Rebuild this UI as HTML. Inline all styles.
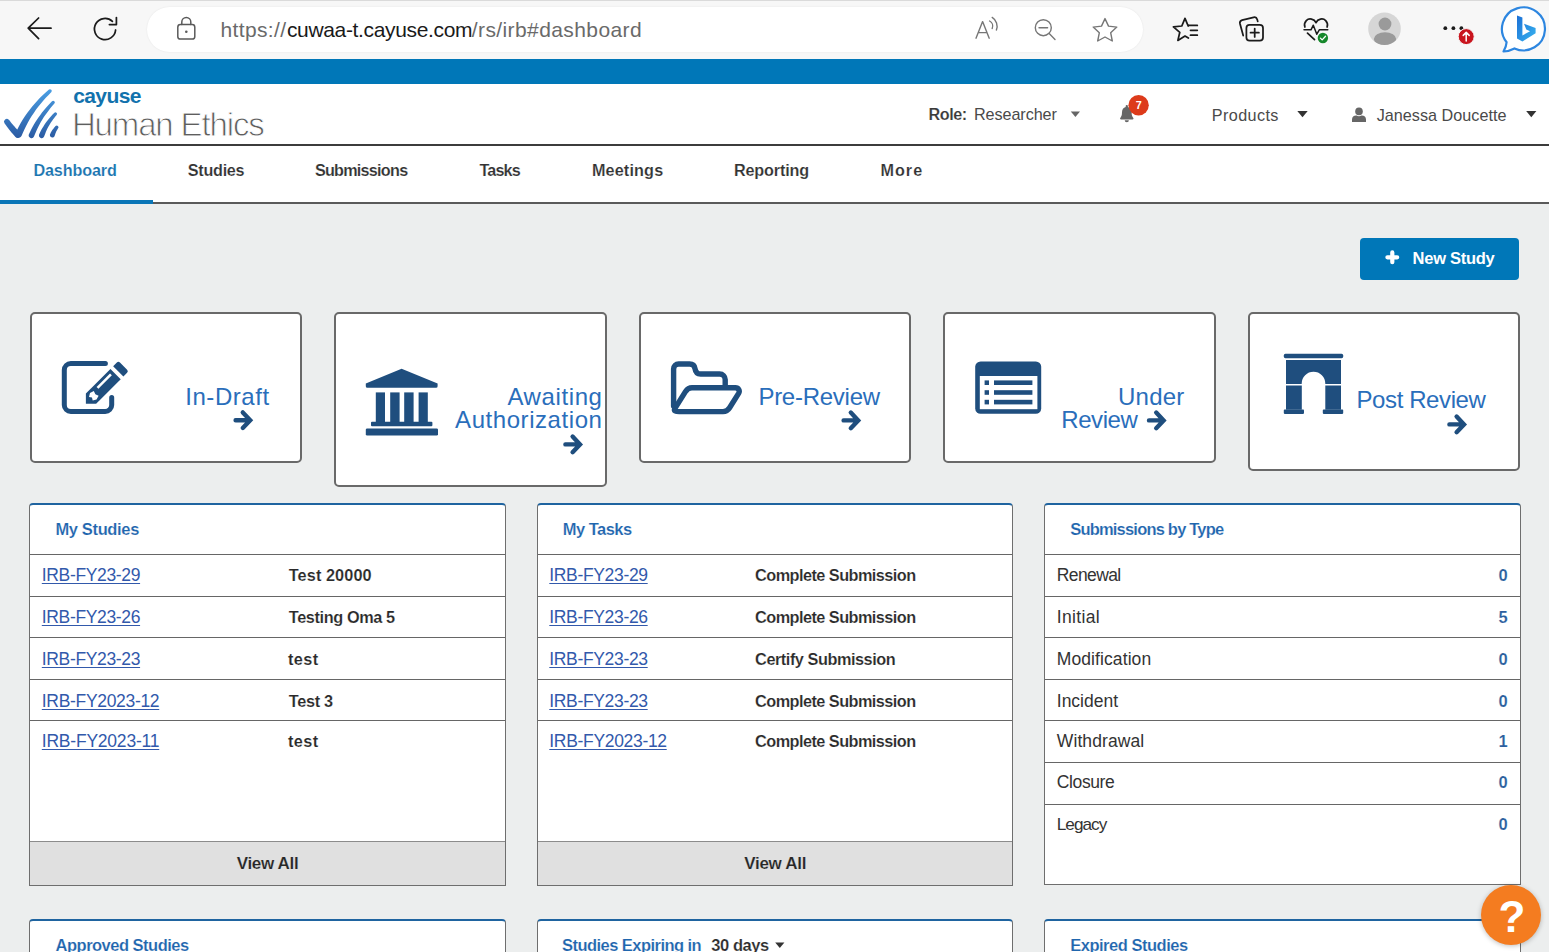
<!DOCTYPE html>
<html lang="en">
<head>
<meta charset="utf-8">
<title>Cayuse Human Ethics - Dashboard</title>
<style>
*{box-sizing:border-box;margin:0;padding:0}
html,body{width:1549px;height:952px;overflow:hidden;background:#eceeee;font-family:"Liberation Sans","DejaVu Sans",sans-serif;color:#333}
#root{position:relative;width:1549px;height:952px;overflow:hidden;background:#eceeee}
.b{position:absolute}
.t{position:absolute;white-space:nowrap;line-height:1}
.t.u{text-decoration:underline;text-decoration-thickness:1px;text-underline-offset:2px}
svg{position:absolute;left:0;top:0;overflow:visible}
/* browser chrome */
#chrome{left:0;top:0;width:1549px;height:59px;background:#f7f7f7;border-top:1px solid #dadada}
#pill{left:147px;top:7px;width:996px;height:45px;border-radius:23px;background:#fff;box-shadow:0 0 2px rgba(0,0,0,.08)}
/* app */
#bluebar{left:0;top:59px;width:1549px;height:25px;background:#0077b8}
#header{left:0;top:84px;width:1549px;height:62px;background:#fff;border-bottom:2px solid #3c3c3c}
#nav{left:0;top:146px;width:1549px;height:58px;background:#fff;border-bottom:2px solid #5a5a5a}
#navactive{left:0;top:200px;width:153px;height:4px;background:#0a76b7}
#newstudy{left:1360px;top:238px;width:159px;height:42px;border-radius:4px;background:#0077b8}
.card{position:absolute;background:#fff;border:2px solid #696969;border-radius:5px}
.panel{position:absolute;background:#fff;border:1px solid #6e6e6e;border-top:2px solid #1f64a0;border-radius:4px 4px 0 0}
.hr{position:absolute;height:1px;background:#666}
.viewall{position:absolute;background:#e0e0e0;border-top:1px solid #8c8c8c;height:44px}
#help{left:1481px;top:885px;width:60px;height:60px;border-radius:50%;background:#f47c20;box-shadow:0 1px 5px rgba(0,0,0,.25)}
</style>
</head>
<body>
<div id="root">

<!-- browser chrome -->
<div class="b" id="chrome"></div>
<div class="b" id="pill"></div>

<!-- app shell -->
<div class="b" id="bluebar"></div>
<div class="b" id="header"></div>
<div class="b" id="nav"></div>
<div class="b" id="navactive"></div>

<div class="b" id="newstudy"></div>

<!-- status cards -->
<div class="card" style="left:30px;top:312px;width:272px;height:151px"></div>
<div class="card" style="left:334px;top:312px;width:273px;height:175px"></div>
<div class="card" style="left:639px;top:312px;width:272px;height:151px"></div>
<div class="card" style="left:943px;top:312px;width:273px;height:151px"></div>
<div class="card" style="left:1248px;top:312px;width:272px;height:159px"></div>

<!-- panels row 1 -->
<div class="panel" style="left:29px;top:503px;width:477px;height:383px">
  <div class="hr" style="left:0;top:49px;width:475px"></div>
  <div class="hr" style="left:0;top:91px;width:475px"></div>
  <div class="hr" style="left:0;top:132px;width:475px"></div>
  <div class="hr" style="left:0;top:174px;width:475px"></div>
  <div class="hr" style="left:0;top:215px;width:475px"></div>
  <div class="viewall" style="left:0;top:336px;width:475px"></div>
</div>
<div class="panel" style="left:537px;top:503px;width:476px;height:383px">
  <div class="hr" style="left:0;top:49px;width:474px"></div>
  <div class="hr" style="left:0;top:91px;width:474px"></div>
  <div class="hr" style="left:0;top:132px;width:474px"></div>
  <div class="hr" style="left:0;top:174px;width:474px"></div>
  <div class="hr" style="left:0;top:215px;width:474px"></div>
  <div class="viewall" style="left:0;top:336px;width:474px"></div>
</div>
<div class="panel" style="left:1044px;top:503px;width:477px;height:382px">
  <div class="hr" style="left:0;top:49px;width:475px"></div>
  <div class="hr" style="left:0;top:91px;width:475px"></div>
  <div class="hr" style="left:0;top:132px;width:475px"></div>
  <div class="hr" style="left:0;top:174px;width:475px"></div>
  <div class="hr" style="left:0;top:215px;width:475px"></div>
  <div class="hr" style="left:0;top:257px;width:475px"></div>
  <div class="hr" style="left:0;top:299px;width:475px"></div>
</div>
<!-- panels row 2 -->
<div class="panel" style="left:29px;top:919px;width:477px;height:60px"></div>
<div class="panel" style="left:537px;top:919px;width:476px;height:60px"></div>
<div class="panel" style="left:1044px;top:919px;width:477px;height:60px"></div>

<div class="b" id="help"></div>

<svg width="1549" height="952" viewBox="0 0 1549 952">
<defs>
<linearGradient id="lg" gradientUnits="userSpaceOnUse" x1="0" y1="138" x2="0" y2="89"><stop offset="0" stop-color="#2b5ba3"/><stop offset="1" stop-color="#4a9fe4"/></linearGradient>
<linearGradient id="bg" x1="0" y1="0" x2="1" y2="1"><stop offset="0" stop-color="#1b6fd6"/><stop offset="1" stop-color="#39b5f0"/></linearGradient>
<clipPath id="av"><circle cx="1384.5" cy="28.8" r="16.3"/></clipPath>
</defs>
<!-- browser icons -->
<g fill="none" stroke="#1b1b1b" stroke-width="1.75" stroke-linecap="round" stroke-linejoin="round">
  <path d="M51 28.2H28.4M38.6 18 28.2 28.2 38.6 38.6"/>
  <path d="M115.6 30A10.6 10.6 0 1 1 112.4 21.4M116.4 17.6V24.6H109.4"/>
  <path d="M1188.2 26 1185 18.4 1181.8 26 1173.4 26.8 1179.8 32.3 1177.9 40.4 1185 36.1 1188.4 38.1M1188.5 25.4H1197.3M1190.5 30.3H1197.3M1190.5 35.2H1197.3"/>
  <rect x="1246.4" y="24.8" width="16.6" height="15.8" rx="3.2"/>
  <path d="M1254.7 28.6V36.9M1250.5 32.7H1258.9"/>
  <path d="M1243.2 35.6 1240 23.8A3 3 0 0 1 1242.1 20.2L1253.6 17.3A3 3 0 0 1 1257.2 19.4L1257.7 21.4"/>
  <path d="M1316 22.6C1314.2 18.8 1309 17.8 1306.3 20.6 1304.4 22.6 1304.2 25 1304.9 27M1316 22.6C1317.8 18.8 1323 17.8 1325.7 20.6 1327.6 22.6 1327.8 25 1327.1 27M1307.5 33.2 1314.5 39.6"/>
  <path d="M1304 29.8H1311L1313.3 25.2 1316.8 34.2 1319.3 29.8H1327.8" stroke-width="1.5"/>
</g>
<g fill="none" stroke="#5a5a5a" stroke-width="1.5" stroke-linecap="round" stroke-linejoin="round">
  <rect x="177.8" y="24.6" width="17" height="14.4" rx="2.6"/>
  <path d="M181.8 24.4V22A4.5 4.5 0 0 1 190.8 22V24.4"/>
</g>
<circle cx="186.3" cy="31.8" r="1.3" fill="#5a5a5a"/>
<g fill="none" stroke="#767676" stroke-width="1.4" stroke-linecap="round" stroke-linejoin="round">
  <path d="M976 38.2 982.6 21.6 989.2 38.2M978.4 32.6H986.8M989.6 21A6 6 0 0 1 992.2 28.6M992.2 17.4A10.5 10.5 0 0 1 996.4 30"/>
  <circle cx="1043.3" cy="27.7" r="8"/>
  <path d="M1049.2 33.6 1055 39.4M1039 27.7H1047.6"/>
  <path d="M1105 18.6 1108.5 26.1 1116.8 27.1 1110.7 32.8 1112.3 41 1105 37 1097.7 41 1099.3 32.8 1093.2 27.1 1101.5 26.1Z"/>
</g>
<circle cx="1322.9" cy="38" r="5.2" fill="#16882b"/>
<path d="M1320.4 38.1 1322.2 39.9 1325.5 36.3" fill="none" stroke="#fff" stroke-width="1.3" stroke-linecap="round" stroke-linejoin="round"/>
<circle cx="1384.5" cy="28.8" r="16.3" fill="#d6d6d6"/>
<g clip-path="url(#av)" fill="#9a9a9a"><circle cx="1385" cy="24" r="6.4"/><ellipse cx="1385" cy="39" rx="11.2" ry="6.8"/></g>
<g fill="#1b1b1b"><circle cx="1445.3" cy="28.2" r="1.9"/><circle cx="1453.4" cy="28.2" r="1.9"/><circle cx="1461.4" cy="28.2" r="1.9"/></g>
<circle cx="1466.2" cy="36.6" r="8" fill="#c9151e" stroke="#f7f7f7" stroke-width="1"/>
<path d="M1466.2 41V32.6M1463.2 35.4 1466.2 32.4 1469.2 35.4" fill="none" stroke="#fff" stroke-width="1.5" stroke-linecap="round" stroke-linejoin="round"/>
<!-- bing -->
<path d="M1503.5 51.5C1505.5 48 1506.4 45.5 1506.6 42.2A21.5 21.5 0 1 1 1514.5 48.4C1511 50.2 1507.5 51.2 1503.5 51.5Z" fill="#fff" stroke="#2d86e0" stroke-width="2.2" stroke-linejoin="round"/>
<path d="M1517 15.6 1522.4 17.5V35.5L1530 31.2 1526.3 29.5 1524 23.8 1535.6 27.9V33.2L1522.4 41.6 1517 38.4Z" fill="url(#bg)"/>

<!-- cayuse logo -->
<g fill="url(#lg)">
  <path d="M4.4 123.1 5.0 124.0 5.8 125.0 6.5 126.0 7.2 127.0 8.0 128.0 8.7 128.9 9.5 129.9 10.3 130.9 11.1 131.9 11.9 132.9 12.7 133.8 13.5 134.8 14.4 135.8 15.2 136.8 A3.2 3.2 0 0 0 20.0 132.4 L19.1 131.5 18.2 130.6 17.4 129.7 16.5 128.8 15.7 127.9 14.9 127.0 14.1 126.1 13.3 125.2 12.5 124.3 11.8 123.4 11.0 122.5 10.3 121.5 9.6 120.6 8.8 119.7 A2.8 2.8 0 0 0 4.4 123.1Z"/>
  <path d="M21.5 136.1 22.9 132.7 24.5 129.3 26.1 125.9 27.9 122.6 29.7 119.3 31.7 116.1 33.8 112.9 35.9 109.8 38.2 106.7 40.7 103.7 43.2 100.7 45.8 97.8 48.6 95.0 51.4 92.1 A1.8 1.8 0 0 0 49.0 89.5 L45.9 92.2 42.9 95.0 40.0 97.8 37.3 100.7 34.6 103.7 32.0 106.8 29.5 109.9 27.2 113.1 24.9 116.3 22.8 119.6 20.7 123.0 18.8 126.4 17.0 129.9 15.3 133.5 A3.4 3.4 0 0 0 21.5 136.1Z"/>
  <path d="M34.0 136.6 34.9 134.2 36.0 131.7 37.1 129.3 38.2 126.9 39.5 124.5 40.8 122.1 42.2 119.7 43.7 117.3 45.3 115.0 47.0 112.7 48.7 110.4 50.5 108.1 52.4 105.8 54.4 103.5 A1.6 1.6 0 0 0 52.0 101.3 L49.9 103.5 47.8 105.7 45.8 108.0 43.9 110.3 42.0 112.6 40.3 114.9 38.6 117.3 36.9 119.7 35.4 122.1 33.9 124.5 32.5 127.0 31.2 129.5 30.0 132.0 28.8 134.6 A2.8 2.8 0 0 0 34.0 136.6Z"/>
  <path d="M44.1 136.6 44.7 135.0 45.3 133.4 45.9 131.8 46.6 130.2 47.4 128.6 48.2 127.1 49.1 125.6 50.0 124.0 50.9 122.5 52.0 121.0 53.0 119.5 54.2 118.0 55.3 116.6 56.6 115.1 A1.6 1.6 0 0 0 54.2 112.9 L52.8 114.3 51.5 115.8 50.2 117.2 48.9 118.7 47.7 120.2 46.5 121.7 45.4 123.2 44.4 124.8 43.4 126.4 42.4 128.0 41.5 129.6 40.6 131.3 39.8 132.9 39.1 134.6 A2.7 2.7 0 0 0 44.1 136.6Z"/>
  <path d="M54.5 136.3 54.7 135.7 54.9 135.1 55.1 134.5 55.3 133.9 55.5 133.3 55.7 132.8 56.0 132.2 56.2 131.6 56.5 131.0 56.8 130.5 57.1 129.9 57.4 129.4 57.8 128.8 58.1 128.3 A1.7 1.7 0 0 0 55.5 126.1 L55.0 126.7 54.5 127.2 54.0 127.8 53.6 128.4 53.2 128.9 52.7 129.5 52.3 130.1 51.9 130.7 51.5 131.3 51.2 132.0 50.8 132.6 50.5 133.2 50.2 133.9 49.9 134.5 A2.5 2.5 0 0 0 54.5 136.3Z"/>
</g>



<!-- header icons -->
<path d="M1070.8 111.4H1080L1075.4 117Z" fill="#666"/>
<path d="M1297.3 111H1307.7L1302.5 117.3Z" fill="#333"/>
<path d="M1526.2 111H1536.4L1531.3 117.3Z" fill="#333"/>
<path d="M1125.7 106A1.1 1.1 0 0 1 1127.9 106V106.9C1130.3 107.5 1131.6 109.5 1131.6 112.2 1131.6 115.6 1132.5 116.9 1133.3 117.9 1133.8 118.5 1133.4 119.4 1132.6 119.4H1121C1120.2 119.4 1119.8 118.5 1120.3 117.9 1121.1 116.9 1122 115.6 1122 112.2 1122 109.5 1123.3 107.5 1125.7 106.9ZM1124.7 120.2H1128.9A2.1 2.1 0 0 1 1124.7 120.2Z" fill="#666"/>
<circle cx="1138.6" cy="105.2" r="10.2" fill="#dd3b1b"/>
<g fill="#666"><circle cx="1359" cy="111.4" r="3.8"/><path d="M1352 121.9V119.6C1352 117.2 1353.8 115.6 1356 115.6H1356.6C1358.2 116.4 1359.8 116.4 1361.4 115.6H1362C1364.2 115.6 1366 117.2 1366 119.6V121.9Z"/></g>
<!-- new study plus -->
<path d="M1392.3 252.4V262.2M1387.4 257.3H1397.2" stroke="#fff" stroke-width="4.2" stroke-linecap="round" fill="none"/>
<!-- dropdown caret in second row -->
<path d="M775.2 942.6H784.4L779.8 948Z" fill="#333"/>

<!-- card icons -->
<g id="arrow"><path d="M235.6 420.2H249.2M242.8 412.4 250.2 420.2 242.8 428" fill="none" stroke="#1f4e7e" stroke-width="4.4" stroke-linecap="round" stroke-linejoin="miter"/></g>
<path d="M565.4 444.4H579M572.6 436.6 580 444.4 572.6 452.2" fill="none" stroke="#1f4e7e" stroke-width="4.4" stroke-linecap="round"/>
<path d="M843.6 420.4H857.2M850.8 412.6 858.2 420.4 850.8 428.2" fill="none" stroke="#1f4e7e" stroke-width="4.4" stroke-linecap="round"/>
<path d="M1149 420.4H1162.6M1156.2 412.6 1163.6 420.4 1156.2 428.2" fill="none" stroke="#1f4e7e" stroke-width="4.4" stroke-linecap="round"/>
<path d="M1449.4 424.4H1463M1456.6 416.6 1464 424.4 1456.6 432.2" fill="none" stroke="#1f4e7e" stroke-width="4.4" stroke-linecap="round"/>

<!-- card1: edit -->
<g>
  <path d="M105.4 363.5H70.8A6.5 6.5 0 0 0 64.3 370V405A6.5 6.5 0 0 0 70.8 411.5H105.2A6.5 6.5 0 0 0 111.7 405V397.4" fill="none" stroke="#1f4e7e" stroke-width="5" stroke-linecap="round"/>
  <g transform="translate(85.9 403.7) rotate(-45)">
    <path d="M0 0 7.25 -7.25H42V7.25H7.25Z" fill="#1f4e7e"/>
    <path d="M45.8 -7.25H51A2.2 2.2 0 0 1 53.2 -5.05V5.05A2.2 2.2 0 0 1 51 7.25H45.8Z" fill="#1f4e7e"/>
    <path d="M19.4 -3H38.4" stroke="#fff" stroke-width="2.6" stroke-linecap="butt"/>
    <path d="M7 -2.6 10.4 -4.6 14.6 -3.4 13.4 0 14.6 3.4 10.4 4.6 7 2.6 8.6 0Z" fill="#fff"/>
  </g>
</g>
<!-- card2: bank -->
<g fill="#1f4e7e">
  <path d="M401.6 368.8 437.6 383.4V386.2A1.6 1.6 0 0 1 436 387.8H367.4A1.6 1.6 0 0 1 365.8 386.2V383.4Z"/>
  <rect x="375.8" y="392.4" width="9.2" height="29.6"/>
  <rect x="390.2" y="392.4" width="9.4" height="29.6"/>
  <rect x="404.2" y="392.4" width="9.4" height="29.6"/>
  <rect x="418.6" y="392.4" width="9.2" height="29.6"/>
  <rect x="371" y="421.8" width="61.4" height="4.4" rx="1"/>
  <rect x="365.8" y="428.4" width="72.2" height="7.2" rx="1.4"/>
</g>
<!-- card3: folder open -->
<g fill="none" stroke="#1f4e7e" stroke-width="5.4" stroke-linejoin="round" stroke-linecap="round">
  <path d="M673.6 406V369A5 5 0 0 1 678.6 364H689.6C692.5 364 694.6 365.8 695 368.6 695.5 372 697.6 374 700.6 374H719.6A5.6 5.6 0 0 1 725.2 379.6V386.6"/>
  <path d="M674.8 408.6 685.6 391.4C687.2 389 689 387.8 692 387.8H735.4C738.6 387.8 740.2 390.6 738.6 393.4L729.6 407.8C728 410.4 726 411.6 723 411.6H679.2C675.6 411.6 673.4 411 674.8 408.6Z"/>
</g>
<!-- card4: list -->
<g>
  <rect x="975.2" y="361.4" width="66" height="52.4" rx="5.4" fill="#1f4e7e"/>
  <rect x="979.8" y="376" width="57.6" height="33.2" fill="#fff"/>
  <g fill="#1f4e7e">
    <rect x="984.6" y="380.4" width="4.4" height="4.6"/><rect x="994" y="380.4" width="38.4" height="4.6"/>
    <rect x="984.6" y="390.2" width="4.4" height="4.6"/><rect x="994" y="390.2" width="38.4" height="4.6"/>
    <rect x="984.6" y="399.8" width="4.4" height="4.6"/><rect x="994" y="399.8" width="38.4" height="4.6"/>
  </g>
</g>
<!-- card5: arch -->
<g fill="#1f4e7e">
  <rect x="1283.8" y="353.8" width="59.4" height="4.4" rx="1.6"/>
  <path d="M1286 359.9H1341V384H1325.3V383.6A11.8 11.8 0 0 0 1301.7 383.6V384H1286Z"/>
  <rect x="1286" y="385.5" width="15.8" height="24.2"/>
  <rect x="1325.3" y="385.5" width="15.7" height="24.2"/>
  <rect x="1283.8" y="409.6" width="20.2" height="4.3" rx=".8"/>
  <rect x="1322.8" y="409.6" width="20.4" height="4.3" rx=".8"/>
</g>
</svg>


<div class="t" style="left:220.4px;top:19px;font-size:21px;color:#6a6a6a;letter-spacing:0.38px;">https://</div>
<div class="t" style="left:286.9px;top:19px;font-size:21px;color:#1a1a1a;letter-spacing:-0.34px;">cuwaa-t.cayuse.com</div>
<div class="t" style="left:471.8px;top:19px;font-size:21px;color:#6a6a6a;letter-spacing:0.40px;">/rs/irb#dashboard</div>
<div class="t" style="left:73.2px;top:85px;font-size:21px;font-weight:bold;color:#1272ad;letter-spacing:-0.59px;">cayuse</div>
<div class="t" style="left:71.9px;top:108px;font-size:33px;color:#5e5e5e;letter-spacing:-1.14px;-webkit-text-stroke:0.9px #fff;">Human Ethics</div>
<div class="t" style="left:928.4px;top:106px;font-size:16.2px;font-weight:bold;color:#3a3a3a;letter-spacing:-0.42px;-webkit-text-stroke:0.15px #fff;">Role:</div>
<div class="t" style="left:973.9px;top:106px;font-size:16.2px;color:#4a4a4a;letter-spacing:-0.07px;">Researcher</div>
<div class="t" style="left:1211.8px;top:107px;font-size:16.2px;color:#4a4a4a;letter-spacing:0.39px;">Products</div>
<div class="t" style="left:1376.7px;top:107px;font-size:16.2px;color:#4a4a4a;letter-spacing:0.01px;">Janessa Doucette</div>
<div class="t" style="left:1135.7px;top:100px;font-size:10.8px;font-weight:bold;color:#fff;">7</div>
<div class="t" style="left:33.4px;top:162px;font-size:16.2px;font-weight:bold;color:#1a75b0;letter-spacing:-0.13px;-webkit-text-stroke:0.15px #fff;">Dashboard</div>
<div class="t" style="left:187.8px;top:162px;font-size:16.2px;font-weight:bold;color:#333;letter-spacing:-0.28px;-webkit-text-stroke:0.15px #fff;">Studies</div>
<div class="t" style="left:314.9px;top:162px;font-size:16.2px;font-weight:bold;color:#333;letter-spacing:-0.75px;-webkit-text-stroke:0.15px #fff;">Submissions</div>
<div class="t" style="left:479.4px;top:162px;font-size:16.2px;font-weight:bold;color:#333;letter-spacing:-0.85px;-webkit-text-stroke:0.15px #fff;">Tasks</div>
<div class="t" style="left:591.9px;top:162px;font-size:16.2px;font-weight:bold;color:#333;letter-spacing:0.16px;-webkit-text-stroke:0.15px #fff;">Meetings</div>
<div class="t" style="left:733.9px;top:162px;font-size:16.2px;font-weight:bold;color:#333;letter-spacing:-0.14px;-webkit-text-stroke:0.15px #fff;">Reporting</div>
<div class="t" style="left:880.4px;top:162px;font-size:16.2px;font-weight:bold;color:#333;letter-spacing:1.04px;-webkit-text-stroke:0.15px #fff;">More</div>
<div class="t" style="left:1412.6px;top:250px;font-size:16.5px;font-weight:bold;color:#fff;letter-spacing:-0.27px;">New Study</div>
<div class="t" style="left:185.2px;top:385px;font-size:24px;color:#2a6ebb;letter-spacing:0.56px;">In-Draft</div>
<div class="t" style="left:507.4px;top:385px;font-size:24px;color:#2a6ebb;letter-spacing:0.61px;">Awaiting</div>
<div class="t" style="left:455.1px;top:408px;font-size:24px;color:#2a6ebb;letter-spacing:0.56px;">Authorization</div>
<div class="t" style="left:758.4px;top:385px;font-size:24px;color:#2a6ebb;letter-spacing:-0.26px;">Pre-Review</div>
<div class="t" style="left:1118.0px;top:385px;font-size:24px;color:#2a6ebb;letter-spacing:0.24px;">Under</div>
<div class="t" style="left:1061.3px;top:408px;font-size:24px;color:#2a6ebb;letter-spacing:-0.44px;">Review</div>
<div class="t" style="left:1356.5px;top:388px;font-size:24px;color:#2a6ebb;letter-spacing:-0.40px;">Post Review</div>
<div class="t" style="left:55.4px;top:521px;font-size:16.5px;font-weight:bold;color:#1f66ae;letter-spacing:-0.35px;-webkit-text-stroke:0.15px #fff;">My Studies</div>
<div class="t" style="left:562.8px;top:521px;font-size:16.5px;font-weight:bold;color:#1f66ae;letter-spacing:-0.54px;-webkit-text-stroke:0.15px #fff;">My Tasks</div>
<div class="t" style="left:1070.2px;top:521px;font-size:16.5px;font-weight:bold;color:#1f66ae;letter-spacing:-0.80px;-webkit-text-stroke:0.15px #fff;">Submissions by Type</div>
<a href="#" class="t u" style="left:41.8px;top:567px;font-size:17.5px;color:#3259ab;letter-spacing:-0.35px;">IRB-FY23-29</a>
<div class="t" style="left:288.8px;top:567px;font-size:16.3px;font-weight:bold;color:#2a2a2a;letter-spacing:0.08px;-webkit-text-stroke:0.15px #fff;">Test 20000</div>
<a href="#" class="t u" style="left:41.8px;top:609px;font-size:17.5px;color:#3259ab;letter-spacing:-0.35px;">IRB-FY23-26</a>
<div class="t" style="left:288.8px;top:609px;font-size:16.3px;font-weight:bold;color:#2a2a2a;letter-spacing:-0.39px;-webkit-text-stroke:0.15px #fff;">Testing Oma 5</div>
<a href="#" class="t u" style="left:41.8px;top:651px;font-size:17.5px;color:#3259ab;letter-spacing:-0.35px;">IRB-FY23-23</a>
<div class="t" style="left:288.1px;top:651px;font-size:16.3px;font-weight:bold;color:#2a2a2a;letter-spacing:0.35px;-webkit-text-stroke:0.15px #fff;">test</div>
<a href="#" class="t u" style="left:41.8px;top:693px;font-size:17.5px;color:#3259ab;letter-spacing:-0.32px;">IRB-FY2023-12</a>
<div class="t" style="left:288.8px;top:693px;font-size:16.3px;font-weight:bold;color:#2a2a2a;letter-spacing:-0.31px;-webkit-text-stroke:0.15px #fff;">Test 3</div>
<a href="#" class="t u" style="left:41.8px;top:733px;font-size:17.5px;color:#3259ab;letter-spacing:-0.22px;">IRB-FY2023-11</a>
<div class="t" style="left:288.1px;top:733px;font-size:16.3px;font-weight:bold;color:#2a2a2a;letter-spacing:0.35px;-webkit-text-stroke:0.15px #fff;">test</div>
<a href="#" class="t u" style="left:549.3px;top:567px;font-size:17.5px;color:#3259ab;letter-spacing:-0.34px;">IRB-FY23-29</a>
<div class="t" style="left:755.1px;top:567px;font-size:16.3px;font-weight:bold;color:#2a2a2a;letter-spacing:-0.55px;-webkit-text-stroke:0.15px #fff;">Complete Submission</div>
<a href="#" class="t u" style="left:549.3px;top:609px;font-size:17.5px;color:#3259ab;letter-spacing:-0.34px;">IRB-FY23-26</a>
<div class="t" style="left:755.1px;top:609px;font-size:16.3px;font-weight:bold;color:#2a2a2a;letter-spacing:-0.55px;-webkit-text-stroke:0.15px #fff;">Complete Submission</div>
<a href="#" class="t u" style="left:549.3px;top:651px;font-size:17.5px;color:#3259ab;letter-spacing:-0.34px;">IRB-FY23-23</a>
<div class="t" style="left:755.1px;top:651px;font-size:16.3px;font-weight:bold;color:#2a2a2a;letter-spacing:-0.46px;-webkit-text-stroke:0.15px #fff;">Certify Submission</div>
<a href="#" class="t u" style="left:549.3px;top:693px;font-size:17.5px;color:#3259ab;letter-spacing:-0.34px;">IRB-FY23-23</a>
<div class="t" style="left:755.1px;top:693px;font-size:16.3px;font-weight:bold;color:#2a2a2a;letter-spacing:-0.55px;-webkit-text-stroke:0.15px #fff;">Complete Submission</div>
<a href="#" class="t u" style="left:549.3px;top:733px;font-size:17.5px;color:#3259ab;letter-spacing:-0.32px;">IRB-FY2023-12</a>
<div class="t" style="left:755.1px;top:733px;font-size:16.3px;font-weight:bold;color:#2a2a2a;letter-spacing:-0.55px;-webkit-text-stroke:0.15px #fff;">Complete Submission</div>
<div class="t" style="left:1056.8px;top:567px;font-size:17.5px;color:#333;letter-spacing:-0.62px;">Renewal</div>
<div class="t" style="left:1498.6px;top:567px;font-size:16.5px;font-weight:bold;color:#2c5f9e;-webkit-text-stroke:0.15px #fff;">0</div>
<div class="t" style="left:1056.8px;top:609px;font-size:17.5px;color:#333;letter-spacing:0.34px;">Initial</div>
<div class="t" style="left:1498.6px;top:609px;font-size:16.5px;font-weight:bold;color:#2c5f9e;-webkit-text-stroke:0.15px #fff;">5</div>
<div class="t" style="left:1056.8px;top:651px;font-size:17.5px;color:#333;letter-spacing:0.09px;">Modification</div>
<div class="t" style="left:1498.6px;top:651px;font-size:16.5px;font-weight:bold;color:#2c5f9e;-webkit-text-stroke:0.15px #fff;">0</div>
<div class="t" style="left:1056.8px;top:693px;font-size:17.5px;color:#333;letter-spacing:-0.01px;">Incident</div>
<div class="t" style="left:1498.6px;top:693px;font-size:16.5px;font-weight:bold;color:#2c5f9e;-webkit-text-stroke:0.15px #fff;">0</div>
<div class="t" style="left:1056.8px;top:733px;font-size:17.5px;color:#333;letter-spacing:0.09px;">Withdrawal</div>
<div class="t" style="left:1498.6px;top:733px;font-size:16.5px;font-weight:bold;color:#2c5f9e;-webkit-text-stroke:0.15px #fff;">1</div>
<div class="t" style="left:1056.8px;top:774px;font-size:17.5px;color:#333;letter-spacing:-0.39px;">Closure</div>
<div class="t" style="left:1498.6px;top:774px;font-size:16.5px;font-weight:bold;color:#2c5f9e;-webkit-text-stroke:0.15px #fff;">0</div>
<div class="t" style="left:1056.8px;top:816px;font-size:17.18px;color:#333;letter-spacing:-0.98px;">Legacy</div>
<div class="t" style="left:1498.6px;top:816px;font-size:16.5px;font-weight:bold;color:#2c5f9e;-webkit-text-stroke:0.15px #fff;">0</div>
<div class="t" style="left:236.8px;top:855px;font-size:17px;font-weight:bold;color:#262626;letter-spacing:-0.34px;-webkit-text-stroke:0.15px #e0e0e0;">View All</div>
<div class="t" style="left:744.2px;top:855px;font-size:17px;font-weight:bold;color:#262626;letter-spacing:-0.28px;-webkit-text-stroke:0.15px #e0e0e0;">View All</div>
<div class="t" style="left:55.6px;top:937px;font-size:16.5px;font-weight:bold;color:#1f66ae;letter-spacing:-0.51px;-webkit-text-stroke:0.15px #fff;">Approved Studies</div>
<div class="t" style="left:562.1px;top:937px;font-size:16.5px;font-weight:bold;color:#1f66ae;letter-spacing:-0.55px;-webkit-text-stroke:0.15px #fff;">Studies Expiring in</div>
<div class="t" style="left:711.3px;top:937px;font-size:16.5px;font-weight:bold;color:#2e2e2e;letter-spacing:-0.44px;-webkit-text-stroke:0.15px #fff;">30 days</div>
<div class="t" style="left:1070.2px;top:937px;font-size:16.5px;font-weight:bold;color:#1f66ae;letter-spacing:-0.48px;-webkit-text-stroke:0.15px #fff;">Expired Studies</div>
<div class="t" style="left:1498.6px;top:895px;font-size:44px;font-weight:bold;color:#fff;">?</div>

</div>
</body>
</html>
